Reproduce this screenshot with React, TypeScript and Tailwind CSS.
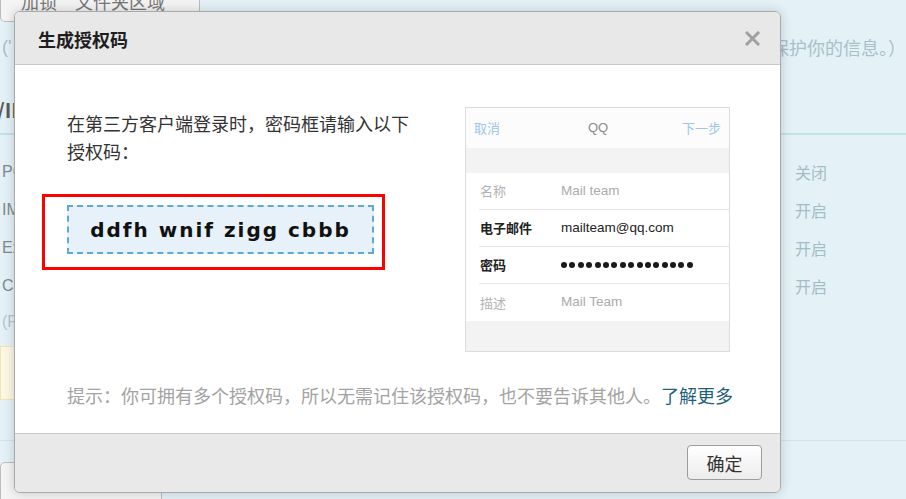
import React from "react";

const cjk = { fontFamily: '"Noto Sans CJK SC", "Noto Sans", sans-serif' };
const latin = { fontFamily: '"Liberation Sans", "Noto Sans CJK SC", sans-serif' };

function Dots() {
  return (
    <div className="flex items-center gap-[2.4px]">
      {Array.from({ length: 16 }).map((_, i) => (
        <div key={i} className="w-[6px] h-[6px] rounded-full bg-[#1a1a1a]" />
      ))}
    </div>
  );
}

function PhoneMock() {
  const rows = [
    { l: "名称", v: "Mail team", dark: false },
    { l: "电子邮件", v: "mailteam@qq.com", dark: true },
    { l: "密码", v: "", dark: true, dots: true },
    { l: "描述", v: "Mail Team", dark: false },
  ];
  return (
    <div className="w-[265px] h-[245px] border border-[#dcdcdc] flex flex-col bg-white" style={latin}>
      <div className="h-[40px] bg-[#fcfcfc] flex items-center justify-between px-[8px] text-[13px]">
        <span className="text-[#9ec6ea]" style={cjk}>取消</span>
        <span className="text-[#8a8a8a] ml-[14px]">QQ</span>
        <span className="text-[#9ec6ea]" style={cjk}>下一步</span>
      </div>
      <div className="h-[25px] bg-[#f3f3f3]" />
      <div className="flex flex-col bg-white">
        {rows.map((r, i) => (
          <div key={i} className="h-[37px] flex pl-[13px]">
            <div className={`flex-1 flex items-center ${i < 3 ? "border-b border-[#e6e6e6]" : ""}`}>
              <span
                className={`w-[82px] pl-[1px] text-[13px] ${r.dark ? "text-[#222] font-bold" : "text-[#b3b3b3]"}`}
                style={cjk}
              >
                {r.l}
              </span>
              {r.dots ? (
                <Dots />
              ) : (
                <span className={`text-[13.5px] ${r.dark ? "text-[#222]" : "text-[#ababab]"}`}>{r.v}</span>
              )}
            </div>
          </div>
        ))}
      </div>
      <div className="flex-1 bg-[#f3f3f3]" />
    </div>
  );
}

function Dialog() {
  return (
    <div
      className="absolute left-[14px] top-[11px] w-[767px] h-[482px] border border-[#a9a9a9] rounded-[6px] overflow-hidden flex flex-col bg-white shadow-[0_0_12px_rgba(0,0,0,0.18)]"
      style={cjk}
    >
      <div className="h-[53px] shrink-0 bg-[#e8e8e8] border-b border-[#c9c9c9] flex items-center justify-between pl-[23px] pr-[20px]">
        <span className="text-[18px] font-bold text-[#1e1e1e] leading-none mt-[1px]">生成授权码</span>
        <svg width="15" height="15" viewBox="0 0 15 15" className="mt-[1px]">
          <path d="M2 2 L13 13 M13 2 L2 13" stroke="#a0a0a0" strokeWidth="3" strokeLinecap="square" />
        </svg>
      </div>
      <div className="h-[368px] shrink-0 flex flex-col pl-[52px] pt-[42px]">
        <div className="flex items-start">
          <div className="w-[398px] shrink-0 pt-[2px] flex flex-col">
            <p className="w-[350px] text-[18px] leading-[28px] text-[#333]">
              在第三方客户端登录时，密码框请输入以下授权码：
            </p>
            <div className="-ml-[25px] mt-[29px] w-[343px] h-[76px] border-[3px] border-[#ff0000] pl-[22px] pt-[8px]">
              <div className="w-[307px] h-[49px] border-2 border-dashed border-[#5ea9d5] bg-[#e6f1f9] flex items-center justify-center">
                <span
                  className="text-[20px] font-bold tracking-[2px] text-[#111]"
                  style={{ fontFamily: '"DejaVu Sans", Verdana, sans-serif' }}
                >
                  ddfh wnif zigg cbbb
                </span>
              </div>
            </div>
          </div>
          <PhoneMock />
        </div>
        <p className="mt-[29px] text-[18px] leading-[28px] text-[#a3a3a3] whitespace-nowrap">
          提示：你可拥有多个授权码，所以无需记住该授权码，也不要告诉其他人。
          <span className="text-[#1f5f7c]">了解更多</span>
        </p>
      </div>
      <div className="flex-1 bg-[#e9e9e9] border-t border-[#c9c9c9] flex justify-end items-start pr-[18px] pt-[11px]">
        <button className="w-[75px] h-[35px] rounded-[4px] border border-[#9c9c9c] bg-gradient-to-b from-white to-[#ececec] text-[18px] text-[#333] leading-none">
          确定
        </button>
      </div>
    </div>
  );
}

export default function App() {
  const rows = [
    ["POP3/SMTP服务", "关闭"],
    ["IMAP/SMTP服务", "开启"],
    ["Exchange服务", "开启"],
    ["CardDAV/CalDAV服务", "开启"],
  ];
  return (
    <div className="relative w-[906px] h-[499px] overflow-hidden bg-[#e4f2f8]" style={cjk}>
      <div className="flex flex-col">
        <div className="w-[200px] h-[22px] border border-t-0 border-[#bdbdbd] rounded-b-[5px] bg-[#f4f4f4] overflow-hidden">
          <div className="-mt-[8px] pl-[20px] text-[18px] leading-[18px] text-[#777] whitespace-nowrap">加锁“文件夹区域”</div>
        </div>
        <div className="mt-[14px] h-[22px] flex items-center text-[18px] text-[#aabfc7]">
          <span className="pl-[2px] shrink-0" style={latin}>('</span>
          <div className="flex-1 min-w-0 overflow-hidden flex justify-end">
            <span className="whitespace-nowrap">为了保障你的帐号安全，开启服务前需要验证身份，我们会全力保护你的信息。）</span>
          </div>
        </div>
        <div className="mt-[40px] h-[24px] -ml-[3px] text-[20px] leading-[24px] font-bold text-[#5a5a5a]">/IMAP/SMTP/Exchange/CardDAV/CalDAV服务</div>
        <div className="mt-[11px] h-[2px] bg-[#c3e1eb]" />
        <div className="mt-[18px] flex flex-col">
          {rows.map(([l, s]) => (
            <div key={l} className="h-[38px] grid grid-cols-[1fr_111px] items-center text-[16px]">
              <span className="pl-[2px] text-[#7f8a8e]" style={latin}>{l}</span>
              <span className="text-[#a6bcc3]">{s}</span>
            </div>
          ))}
          <div className="h-[34px] flex items-center pl-[2px] text-[16px] text-[#b2c6ce]" style={latin}>(POP3/IMAP/SMTP/CardDAV/CalDAV服务均支持SSL连接)</div>
        </div>
        <div className="mt-[7px] h-[54px] w-[760px] bg-[#fdf7e6] border border-[#f2e3b8]" />
        <div className="mt-[40px] h-[1px] bg-[#cfe5ee]" />
        <div className="mt-[21px] w-[162px] h-[40px] border border-[#bdbdbd] rounded-t-[5px] bg-[#f4f4f4]" />
      </div>
      <Dialog />
    </div>
  );
}
